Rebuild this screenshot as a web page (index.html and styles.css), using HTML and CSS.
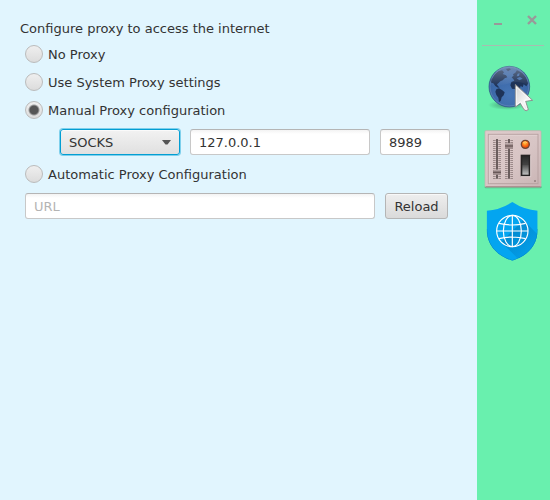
FILE: index.html
```html
<!DOCTYPE html>
<html lang="en">
<head>
<meta charset="utf-8">
<title>Proxy settings</title>
<link rel="stylesheet" href="styles.css">
</head>
<body>
<main class="settings">
  <form class="proxy-form">
    <h1 class="title">Configure proxy to access the internet</h1>
    <label class="option"><input class="radio" type="radio" name="mode">No Proxy</label>
    <label class="option"><input class="radio" type="radio" name="mode">Use System Proxy settings</label>
    <label class="option"><input class="radio" type="radio" name="mode" checked>Manual Proxy configuration</label>
    <div class="row manual">
      <div class="picker">
        <select class="type" aria-label="Proxy type"><option>SOCKS</option><option>HTTP</option></select>
        <svg class="arrow" viewBox="0 0 9 5" aria-hidden="true"><path d="M0 0H9L5.5 4.5H3.5Z" fill="#555"/></svg>
      </div>
      <input class="field host" type="text" value="127.0.0.1" aria-label="Host">
      <input class="field port" type="text" value="8989" aria-label="Port">
    </div>
    <label class="option"><input class="radio" type="radio" name="mode">Automatic Proxy Configuration</label>
    <div class="row auto">
      <input class="field url" type="text" placeholder="URL" aria-label="Configuration URL">
      <button class="reload" type="button">Reload</button>
    </div>
  </form>
</main>
<aside class="sidebar">
  <div class="window-bar">
    <button class="window-button" type="button" aria-label="Minimize"><svg width="12" height="12" viewBox="0 0 12 12"><path d="M2 9h8v2H2z" fill="#999"/></svg></button>
    <button class="window-button" type="button" aria-label="Close"><svg width="12" height="12" viewBox="0 0 12 12"><path d="M2 2L10 10M10 2L2 10" stroke="#999" stroke-width="2.4"/></svg></button>
  </div>
  <nav class="tools">
    <button class="tool" type="button" aria-label="Browser">
      <svg width="64" height="64" viewBox="0 0 192 192">
        <defs>
          <radialGradient id="sea" cx=".5" cy=".7" r=".75"><stop offset="0" stop-color="#4676b6"/><stop offset=".65" stop-color="#3b67a6"/><stop offset="1" stop-color="#2b4f8a"/></radialGradient>
          <linearGradient id="shine" x2="0" y2="1"><stop offset="0" stop-color="#fff" stop-opacity=".4"/><stop offset="1" stop-color="#fff" stop-opacity="0"/></linearGradient>
          <radialGradient id="shade"><stop offset=".3" stop-color="#245b43" stop-opacity=".4"/><stop offset="1" stop-color="#245b43" stop-opacity="0"/></radialGradient>
          <linearGradient id="pointer" x2="1" y2="1"><stop offset="0" stop-color="#d0d0d0"/><stop offset=".6" stop-color="#f5f5f5"/><stop offset="1" stop-color="#ccc"/></linearGradient>
          <clipPath id="disc"><circle cx="88" cy="86" r="60"/></clipPath>
        </defs>
        <ellipse cx="82" cy="141" rx="58" ry="15" fill="url(#shade)"/>
        <circle cx="88" cy="86" r="61" fill="url(#sea)" stroke="#2b4b82" stroke-width="2"/>
        <g clip-path="url(#disc)" fill="#1e3358">
          <path d="M37 60L45 48L55 40L66 37L72 43L68 48L78 52L82 58L74 61L68 67L61 70L55 76L51 79L54 85L59 88L54 89L46 84L40 76L34 74L31 66Z"/>
          <path d="M49 94L57 91L67 97L74 103L71 112L65 118L62 129L57 132L55 119L49 111L46 101Z"/>
          <path d="M78 33L88 31L93 34L84 40Z"/>
          <path d="M95 58L101 53L99 49L106 44L111 37L126 44L138 58L145 76L139 85L131 79L128 88L122 84L120 91L124 96L127 103L121 114L116 111L113 97L104 93L96 92L91 82L94 72L103 68L100 63Z"/>
          <path d="M110 61L120 57L128 62L118 67Z" fill="#3e69a7"/>
          <path d="M113 47L119 46L117 54L110 55Z" fill="#3e69a7"/>
        </g>
        <path d="M30 83A58 58 0 0 1 146 83Q118 65 88 76T30 83Z" fill="url(#shine)" opacity=".8"/>
        <circle cx="88" cy="86" r="58" fill="none" stroke="#8da9d0" stroke-width="2" opacity=".5"/>
        <path d="M106 79L106 147L121 136L132 155Q138 162 145 155L137 130L158 127Z" fill="url(#pointer)" stroke="#858585" stroke-width="2.5" stroke-linejoin="round"/>
        <path d="M109 87L109 141L122 131L136 153L141 153L132 127L150 124Z" fill="none" stroke="#fff" stroke-width="2"/>
      </svg>
    </button>
    <button class="tool" type="button" aria-label="Controls">
      <svg width="64" height="67" viewBox="0 3 192 201">
        <defs>
          <linearGradient id="panel" x2="1" y2="1"><stop offset="0" stop-color="#decbcb"/><stop offset=".55" stop-color="#d8c5c5"/><stop offset="1" stop-color="#c9b4b4"/></linearGradient>
          <linearGradient id="rocker" x2="0" y2="1"><stop offset="0" stop-color="#292929"/><stop offset=".48" stop-color="#454545"/><stop offset=".5" stop-color="#555"/><stop offset="1" stop-color="#c0c0c0"/></linearGradient>
          <radialGradient id="lamp" cx=".45" cy=".35"><stop offset="0" stop-color="#ffd04d"/><stop offset=".45" stop-color="#ff8b22"/><stop offset="1" stop-color="#f04e08"/></radialGradient>
        </defs>
        <rect x="14" y="186" width="171" height="7" rx="3" fill="#438e66" opacity=".55"/>
        <rect x="15" y="20" width="168" height="169" rx="3" fill="url(#panel)" stroke="#c9adad" stroke-width="2"/>
        <path d="M17 188H182" stroke="#a78b8b" stroke-width="3"/>
        <rect x="25" y="31" width="149" height="148" fill="none" stroke="#b8a2a2" stroke-width="3"/>
        <path d="M28 178V34H172" fill="none" stroke="#e6d6d6" stroke-width="2"/>
        <path d="M43 48V165M59 48V165M79 48V165M95 48V165" stroke="#9b8989" stroke-width="8" stroke-dasharray="3 3"/>
        <path d="M51 45V164M87 45V164" stroke="#6b5d5d" stroke-width="6"/>
        <rect x="39" y="137" width="24" height="15" rx="2" fill="#a08d8d"/>
        <path d="M39 145H63" stroke="#695858" stroke-width="4"/><path d="M41 138H61" stroke="#cfbebe" stroke-width="2"/>
        <rect x="75" y="58" width="24" height="16" rx="2" fill="#a08d8d"/>
        <path d="M75 66H99" stroke="#695858" stroke-width="4"/><path d="M77 59H97" stroke="#cfbebe" stroke-width="2"/>
        <circle cx="136" cy="61" r="12" fill="url(#lamp)" stroke="#704632" stroke-width="4"/>
        <path d="M129 57Q135 49 142 57" fill="none" stroke="#ffe090" stroke-width="2"/>
        <rect x="122" y="92" width="29" height="65" fill="#262323"/>
        <rect x="127" y="97" width="19" height="55" fill="url(#rocker)"/>
        <path d="M152 94V158H123" fill="none" stroke="#f0e3e3" stroke-width="2"/>
        <rect x="162" y="168" width="6" height="6" fill="#a18d8d"/>
      </svg>
    </button>
    <button class="tool" type="button" aria-label="Network protection">
      <svg width="64" height="70" viewBox="0 -3 192 210">
        <defs>
          <linearGradient id="fold" gradientUnits="userSpaceOnUse" x1="95" y1="105" x2="150" y2="160"><stop offset="0" stop-color="#028bd0"/><stop offset="1" stop-color="#039be5"/></linearGradient>
          <clipPath id="shield"><path d="M97 18Q133 42 173 44V99C173 148 142 180 97 194C52 180 20 148 20 99V44Q61 42 97 18Z"/></clipPath>
        </defs>
        <g clip-path="url(#shield)">
          <path d="M15 14H180V200H15Z" fill="#03a5f0"/>
          <path d="M130 72L180 122V200H126L64 138Z" fill="url(#fold)"/>
          <path d="M20 99C20 148 52 180 97 194C142 180 173 148 173 99" fill="none" stroke="#0784c0" stroke-width="3"/>
        </g>
        <g fill="none" stroke="#fff" stroke-width="3.5">
          <circle cx="97" cy="105" r="47"/><ellipse cx="97" cy="105" rx="27" ry="47"/>
          <path d="M97 58V152M50 105H144M57 82Q97 92 137 82M57 128Q97 118 137 128"/>
        </g>
      </svg>
    </button>
  </nav>
</aside>
</body>
</html>
```

FILE: styles.css
```css
* { box-sizing: border-box; }

body {
  display: flex;
  min-height: 100vh;
  margin: 0;
  background: #e1f5fe;
  color: #333;
  font: 13px/15px "DejaVu Sans", sans-serif;
}

button, input, select { font: inherit; color: inherit; }

.settings { flex: 1; min-width: 0; padding: 22px 27px 20px 20px; }

.proxy-form { display: flex; flex-direction: column; gap: 10px; }

.title { margin: 0; font-size: 13px; font-weight: normal; line-height: 13px; }

.option {
  display: flex;
  align-items: center;
  align-self: flex-start;
  gap: 5px;
  height: 18px;
  margin-left: 5px;
}

.radio {
  appearance: none;
  width: 18px;
  height: 18px;
  margin: 0;
  border: 1px solid #bbb;
  border-radius: 50%;
  background: linear-gradient(#efefef, #dcdcdc);
}

.radio:checked {
  background: radial-gradient(circle, #555 0 4px, transparent 6px), linear-gradient(#efefef, #dcdcdc);
}

.row { display: flex; gap: 10px; }
.manual { margin-left: 40px; }
.auto { margin-left: 5px; margin-right: 2px; }

.picker { position: relative; flex: 0 0 120px; }

.type {
  appearance: none;
  display: block;
  width: 100%;
  height: 26px;
  padding: 0 8px;
  border: 1px solid #039ed3;
  border-radius: 3px;
  outline: 0;
  background: linear-gradient(#f2f2f2, #e0e0e0);
  box-shadow: 0 0 0 1px #7fd0ec, inset 0 1px #fafafa;
}

.arrow {
  position: absolute;
  top: 11px;
  right: 9px;
  width: 9px;
  height: 5px;
  pointer-events: none;
}

.field {
  min-width: 0;
  height: 26px;
  padding: 0 8px;
  border: 1px solid #c8c8c8;
  border-top-color: #b5b5b5;
  border-radius: 3px;
  background: linear-gradient(#f3f3f3, #fff 4px);
}

.field::placeholder { color: #b4b4b4; opacity: 1; }
.host, .url { flex: 1; }
.port { width: 70px; }

.reload {
  min-width: 63px;
  height: 26px;
  padding: 0 8px;
  border: 1px solid #b5b5b5;
  border-radius: 3px;
  background: linear-gradient(#eee, #dadada);
  box-shadow: inset 0 1px #f8f8f8;
}

.sidebar { flex: 0 0 73px; padding: 0 6px 0 3px; background: #69f0ae; }

.window-bar {
  display: flex;
  justify-content: space-between;
  height: 46px;
  margin: 0 0 12px 2px;
  padding: 14px 6px 0 10px;
  border-bottom: 1px solid #a8bcb0;
}

.window-button, .tool { padding: 0; border: 0; background: none; }
.window-button { width: 12px; height: 12px; }
.window-button svg, .tool svg { display: block; }

.tools { display: flex; flex-direction: column; align-items: flex-start; gap: 3px; }
```
